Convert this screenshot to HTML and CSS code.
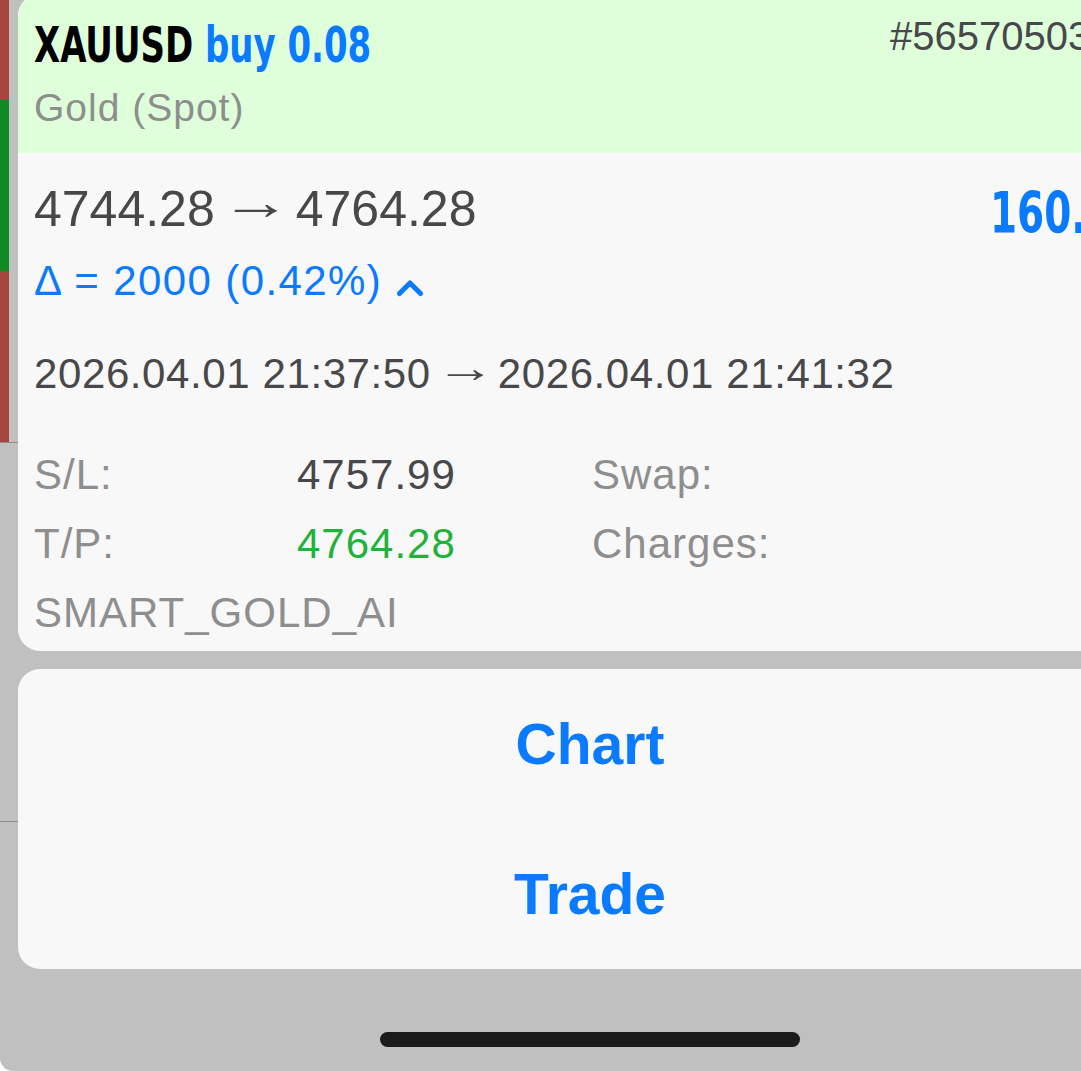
FILE: index.html
```html
<!DOCTYPE html>
<html lang="en">
<head>
<meta charset="utf-8">
<title>XAUUSD position</title>
<link rel="stylesheet" href="styles.css">
</head>
<body>
<div class="screen">
  <div class="side">
    <div class="bar red bar-a"></div>
    <div class="bar green bar-b"></div>
    <div class="bar red bar-c"></div>
    <div class="sep"></div>
    <div class="side-gap"></div>
    <div class="sep"></div>
  </div>
  <div class="main">
    <section class="card">
      <header class="card-head">
        <div class="head-row">
          <div class="title"><span class="sym">XAUUSD</span> <span class="side-lbl">buy 0.08</span></div>
          <div class="ticket">#56570503</div>
        </div>
        <div class="desc">Gold (Spot)</div>
      </header>
      <div class="card-body">
        <div class="price-grid">
          <div class="price-left">
            <div class="prices">4744.28<span class="arrow">→</span>4764.28</div>
            <div class="delta">Δ = 2000 (0.42%)<svg class="chev" width="28" height="18" viewBox="0 0 28 18"><polyline points="3.5,14.5 14,4 24.5,14.5" fill="none" stroke="#0a7aff" stroke-width="5" stroke-linecap="round" stroke-linejoin="round"/></svg></div>
          </div>
          <div class="profit">160.00</div>
        </div>
        <div class="times">2026.04.01 21:37:50<span class="arrow">→</span>2026.04.01 21:41:32</div>
        <div class="details">
          <div class="lbl">S/L:</div><div class="val">4757.99</div><div class="lbl">Swap:</div>
          <div class="lbl">T/P:</div><div class="val tp">4764.28</div><div class="lbl">Charges:</div>
          <div class="lbl comment">SMART_GOLD_AI</div>
        </div>
      </div>
    </section>
    <section class="actions">
      <div class="action">Chart</div>
      <div class="action">Trade</div>
    </section>
    <div class="home-bar"></div>
  </div>
</div>
</body>
</html>
```

FILE: styles.css
```css
html, body {
  margin: 0;
  padding: 0;
  background: #ffffff;
  overflow: hidden;
}

body {
  font-family: "Liberation Sans", Arial, sans-serif;
}

.screen {
  width: 1180px;
  height: 1071px;
  background: #c0c0c0;
  border-bottom-left-radius: 13px;
  display: flex;
  overflow: hidden;
}

.side {
  width: 18px;
  flex: none;
  display: flex;
  flex-direction: column;
}

.bar {
  width: 9px;
}

.red { background: #a8453f; }
.green { background: #108a25; }
.bar-a { height: 100px; }
.bar-b { height: 171px; }
.bar-c { height: 171px; }

.sep {
  height: 1px;
  background: #8f8f8f;
}

.side-gap { height: 378px; }

.main {
  width: 1144px;
  flex: none;
  display: flex;
  flex-direction: column;
}

.card {
  margin-top: -6px;
  height: 657px;
  background: #f8f8f8;
  border-radius: 22px 0 0 22px;
  overflow: hidden;
}

.card-head {
  height: 159px;
  box-sizing: border-box;
  background: #dfffdb;
  padding: 21px 16px 0 16px;
}

.head-row {
  display: grid;
  grid-template-columns: 856px 1fr;
  align-items: start;
}

.title {
  display: inline-block;
  justify-self: start;
  font-family: "DejaVu Sans Condensed", "DejaVu Sans", sans-serif;
  font-weight: bold;
  font-size: 50px;
  line-height: 60px;
  letter-spacing: 0;
  white-space: nowrap;
  transform: scaleX(0.755);
  transform-origin: 0 50%;
}

.sym { color: #000000; }
.side-lbl { color: #0a7aff; }

.ticket {
  font-size: 40px;
  line-height: 42px;
  color: #48484c;
  white-space: nowrap;
}

.desc {
  font-size: 39px;
  line-height: 66px;
  letter-spacing: 1px;
  color: #8e8e8e;
}

.card-body {
  padding: 21px 16px 0 16px;
  color: #48484a;
}

.price-grid {
  display: grid;
  grid-template-columns: 956px 1fr;
  align-items: start;
}

.prices {
  font-size: 50px;
  line-height: 70px;
  white-space: nowrap;
}

.arrow {
  display: inline-block;
  letter-spacing: 0;
  margin: 0 15px 0 16px;
  transform: translateY(-7px) scaleX(1.42);
}

.delta {
  font-size: 42px;
  line-height: 74px;
  letter-spacing: 1.4px;
  color: #0a7aff;
  white-space: nowrap;
}

.chev {
  margin-left: 14px;
  vertical-align: -2px;
}

.profit {
  justify-self: start;
  font-family: "DejaVu Sans Condensed", "DejaVu Sans", sans-serif;
  font-weight: bold;
  font-size: 57px;
  line-height: 78px;
  color: #0a7aff;
  white-space: nowrap;
  transform: scaleX(0.76);
  transform-origin: 0 50%;
}

.times {
  margin-top: 21px;
  font-size: 42px;
  line-height: 70px;
  letter-spacing: 0.6px;
  white-space: nowrap;
}

.times .arrow {
  margin: 0 12px 0 13px;
  transform: translateY(-6px) scaleX(1.42);
}

.details {
  margin-top: 31px;
  display: grid;
  grid-template-columns: 263px 295px 1fr;
  font-size: 42px;
  line-height: 69px;
  letter-spacing: 1px;
}

.lbl { color: #8e8e8e; }
.val { color: #48484a; }
.val.tp { color: #21b23b; }
.comment { grid-column: 1 / -1; }

.actions {
  margin-top: 18px;
  height: 300px;
  background: #f8f8f8;
  border-radius: 22px 0 0 22px;
  display: flex;
  flex-direction: column;
}

.action {
  height: 150px;
  display: flex;
  align-items: center;
  justify-content: center;
  font-weight: bold;
  font-size: 57px;
  color: #0a7aff;
}

.home-bar {
  margin: 63px auto 0 auto;
  width: 420px;
  height: 15px;
  border-radius: 8px;
  background: #1b1b1b;
}
```
